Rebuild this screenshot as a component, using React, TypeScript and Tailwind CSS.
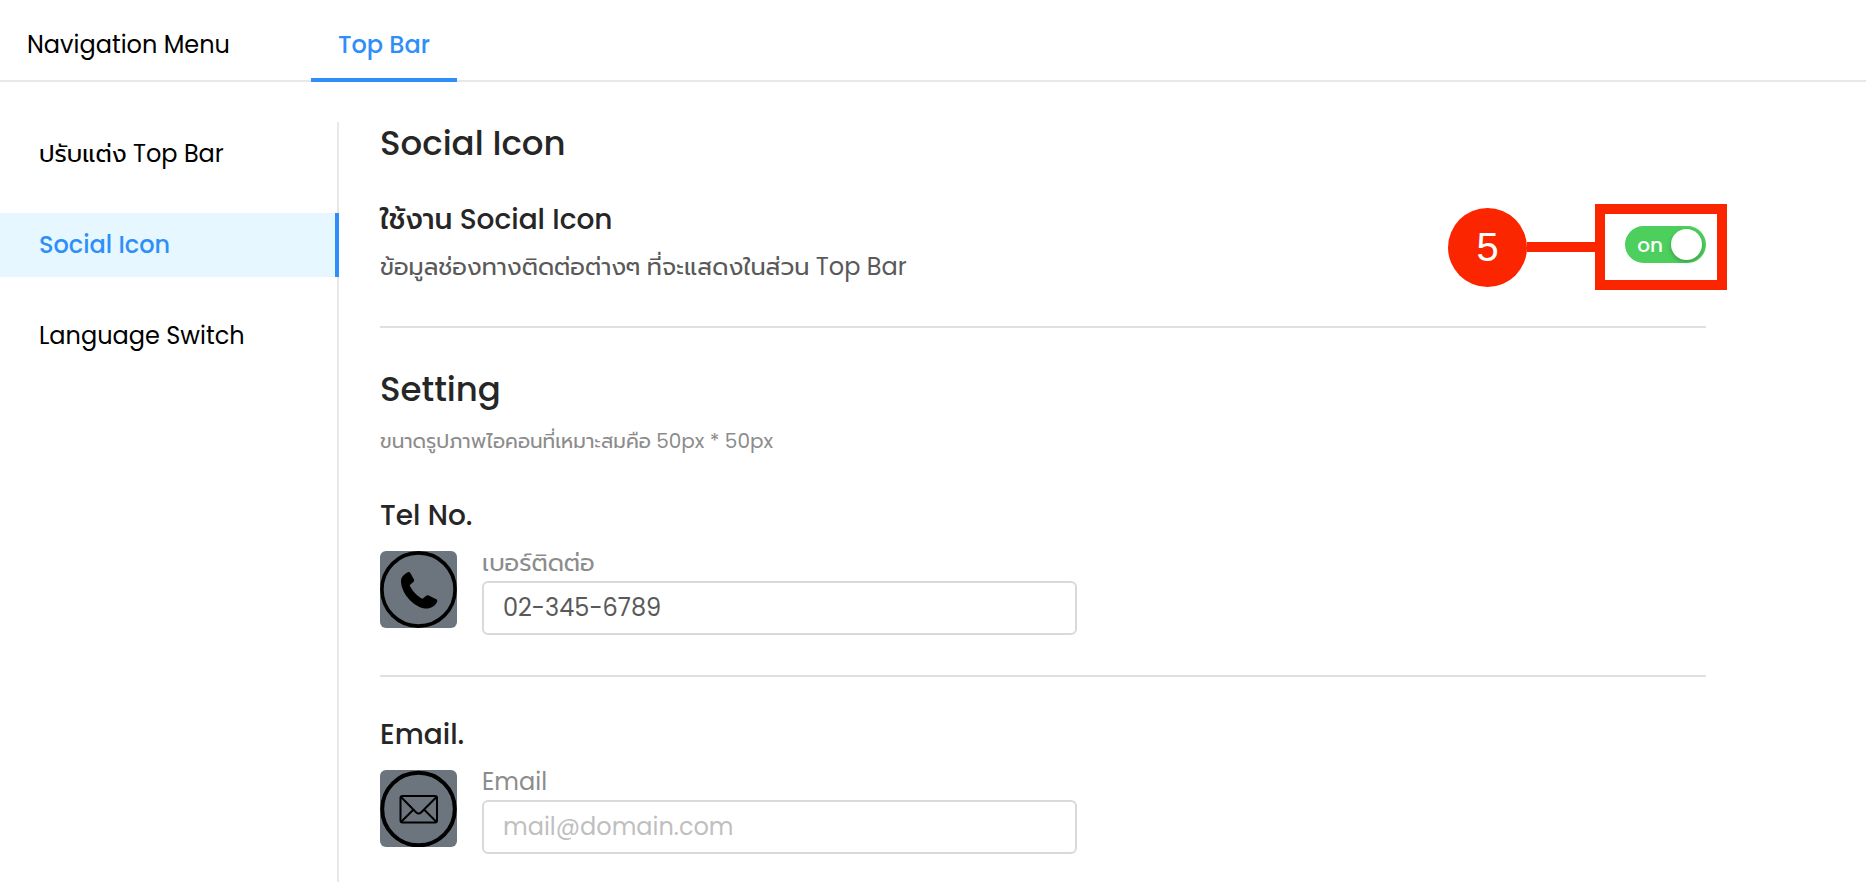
import { useState } from 'react'
import type { ReactNode } from 'react'

// ─── Data ─────────────────────────────────────────────────
const TABS = ['Navigation Menu', 'Top Bar']
const SECTIONS = ['ปรับแต่ง Top Bar', 'Social Icon', 'Language Switch']

// ─── Icons ────────────────────────────────────────────────
function PhoneIcon() {
  return (
    <svg viewBox="0 0 77 77" className="w-full h-full" fill="none" aria-hidden="true">
      <circle cx="38.5" cy="38.5" r="36.6" stroke="#000" strokeWidth="3.6" />
      <path
        fill="#000"
        d="M27.5 21.5c1.1-.7 2.2-.4 2.8.6l3.6 6.2c.5 1 .3 2-.5 2.6l-3.8 3.3c2.5 5.6 7.2 10.6 13 13.6l3.3-2.9c.8-.8 1.800-.9 2.8-.4l7.5 3.7c1.2.7 1.5 1.9.7 3.1-2.3 3.9-5.8 6.3-10.2 6.3C35 57.6 21 43 21 30c0-3.8 2.5-6.3 6.5-8.5z"
      />
    </svg>
  )
}

function MailIcon() {
  return (
    <svg viewBox="0 0 77 77" className="w-full h-full" fill="none" stroke="#000" aria-hidden="true">
      <circle cx="38.5" cy="39" r="36.3" strokeWidth="4" />
      <g strokeWidth="2" strokeLinejoin="round" strokeLinecap="round">
        <rect x="20.5" y="26" width="36.5" height="26.5" rx="2" />
        <path d="M21 27l15 15.2c1.7 1.7 3.6 1.7 5.3 0L56.5 27" />
        <path d="M21.5 51.5L33 40M56 51.5L44.5 40" />
      </g>
    </svg>
  )
}

// ─── Toggle ───────────────────────────────────────────────
function Toggle({ checked, onChange }: { checked: boolean; onChange: (v: boolean) => void }) {
  return (
    <label className={[
      'relative flex items-center w-[81px] h-[37px] rounded-full px-1 cursor-pointer',
      checked ? 'bg-[#4ccf5c]' : 'bg-gray-300 flex-row-reverse',
    ].join(' ')}>
      <input
        type="checkbox"
        aria-label="ใช้งาน Social Icon"
        checked={checked}
        onChange={e => onChange(e.target.checked)}
        className="sr-only"
      />
      <span className="flex-1 text-center text-xl leading-6 font-medium text-white">
        {checked ? 'on' : 'off'}
      </span>
      <span className="w-[31px] h-[31px] rounded-full bg-white shadow-[0_2px_4px_rgba(0,0,0,0.25)]" />
    </label>
  )
}

// ─── Step marker (sits over the toggle) ───────────────────
function StepMarker({ step }: { step: number }) {
  return (
    <div className="absolute -right-[21px] -top-[22px] flex items-center pointer-events-none">
      <span className="w-[79px] h-[79px] rounded-full bg-[#fb2600] text-white text-[40px]
                       font-['Liberation_Sans',sans-serif] flex items-center justify-center">
        {step}
      </span>
      <span className="w-[68px] h-[10px] bg-[#fb2600]" />
      <span className="w-[132px] h-[86px] border-[10px] border-[#fb2600]" />
    </div>
  )
}

// ─── Field ────────────────────────────────────────────────
interface FieldProps {
  id:           string
  title:        string
  label:        string
  icon:         ReactNode
  value?:       string
  placeholder?: string
}

function Field({ id, title, label, icon, value, placeholder }: FieldProps) {
  return (
    <section>
      <h3 className="text-[28px] leading-10 font-medium text-[#262626]">{title}</h3>
      <div className="flex mt-[15px] gap-[25px]">
        <div className="w-[77px] h-[77px] rounded-md overflow-hidden bg-[#6c757d]">{icon}</div>
        <div className="flex flex-col w-[595px]">
          <label htmlFor={id} className="h-[30px] text-2xl leading-6 text-[#8c8c8c]">{label}</label>
          <input
            id={id}
            type="text"
            defaultValue={value}
            placeholder={placeholder}
            className="h-[54px] w-full border-2 border-[#d9d9d9] rounded-md px-[19px] pb-0.5 text-2xl
                       text-[#595959] placeholder:text-[#bfbfbf] outline-none"
          />
        </div>
      </div>
    </section>
  )
}

// ─── Page ─────────────────────────────────────────────────
export default function App() {
  const [tab, setTab] = useState(1)
  const [section, setSection] = useState(1)
  const [enabled, setEnabled] = useState(true)

  return (
    <div className="flex flex-col h-screen overflow-hidden bg-white font-['Poppins','Prompt','Noto_Sans_Thai','Inter',sans-serif]">
      <nav className="flex shrink-0 gap-[54px] h-[82px] border-b-2 border-[#e8e8e8]">
        {TABS.map((name, i) => (
          <button
            key={name}
            type="button"
            onClick={() => setTab(i)}
            className={[
              'h-[82px] px-[27px] pt-3 text-2xl border-b-4',
              i === tab ? 'border-[#2f8ff8] text-[#2f8ff8] font-medium' : 'border-transparent text-black',
            ].join(' ')}
          >
            {name}
          </button>
        ))}
      </nav>

      <div className="flex flex-1 min-h-0 pt-10">
        <aside className="flex flex-col gap-[27px] w-[339px] shrink-0 border-r-2 border-[#e8e8e8]">
          {SECTIONS.map((name, i) => (
            <button
              key={name}
              type="button"
              onClick={() => setSection(i)}
              className={[
                '-mr-0.5 h-16 pl-[39px] text-left text-2xl border-r-4',
                i === section
                  ? 'bg-[#e6f7ff] border-[#2f8ff8] text-[#2f8ff8] font-medium'
                  : 'border-transparent text-black',
              ].join(' ')}
            >
              {name}
            </button>
          ))}
        </aside>

        <main className="flex-1 pl-[41px] pr-40">
          <h1 className="text-[34px] leading-[42px] font-medium text-[#262626]">Social Icon</h1>

          <div className="flex justify-between mt-[33px] pb-[35px] border-b-2 border-[#e0e0e0]">
            <div>
              <h2 className="text-[28px] leading-[46px] font-medium text-[#262626]">ใช้งาน Social Icon</h2>
              <p className="text-2xl leading-[48px] text-[#595959]">
                ข้อมูลช่องทางติดต่อต่างๆ ที่จะแสดงในส่วน Top Bar
              </p>
            </div>
            <div className="relative self-start mt-[29px]">
              <Toggle checked={enabled} onChange={setEnabled} />
              <StepMarker step={5} />
            </div>
          </div>

          <h2 className="mt-10 text-[34px] leading-[42px] font-medium text-[#262626]">Setting</h2>
          <p className="mt-[15px] text-xl leading-8 text-[#8c8c8c]">ขนาดรูปภาพไอคอนที่เหมาะสมคือ 50px * 50px</p>

          <div className="mt-[39px] pb-10 border-b-2 border-[#e0e0e0]">
            <Field id="tel" title="Tel No." label="เบอร์ติดต่อ" icon={<PhoneIcon />} value="02-345-6789" />
          </div>
          <div className="mt-[38px]">
            <Field id="email" title="Email." label="Email" icon={<MailIcon />} placeholder="mail@domain.com" />
          </div>
        </main>
      </div>
    </div>
  )
}
